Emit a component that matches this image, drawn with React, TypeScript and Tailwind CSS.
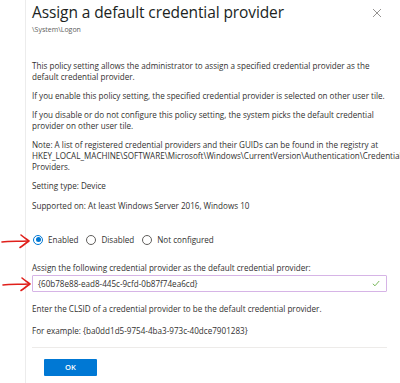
import React from "react";

const Arrow = ({ className }: { className: string }) => (
  <svg className={className} width="32" height="16" viewBox="0 0 32 16" fill="none">
    <path d="M1 9 C 8 8, 16 8.5, 27 8" stroke="#e0201b" strokeWidth="1.6" strokeLinecap="round" />
    <path d="M20 2 C 23 4.5, 26 6.5, 28 8 C 25 10, 22 12.5, 19 14.5" stroke="#e0201b" strokeWidth="1.6" strokeLinecap="round" strokeLinejoin="round" />
  </svg>
);

const Radio = ({ checked, label }: { checked?: boolean; label: string }) => (
  <div className="flex items-center gap-[5px]">
    <div className={`w-[10px] h-[10px] rounded-full border flex items-center justify-center ${checked ? "border-[#0078d4]" : "border-[#605e5c]"}`}>
      {checked && <div className="w-[5px] h-[5px] rounded-full bg-[#0078d4]" />}
    </div>
    <span>{label}</span>
  </div>
);

export default function App() {
  return (
    <div className="relative w-[400px] h-[383px] bg-white overflow-hidden text-[#323130] font-['Open_Sans','Noto_Sans',sans-serif]">
      <div className="ml-[25px] h-full border-l border-[#ececec] pl-[6px] pr-[13px]">
        <div className="flex items-start justify-between">
          <div className="pt-[1px]">
            <div className="text-[15.5px] leading-[22px] text-[#201f1e] tracking-[-0.1px]">Assign a default credential provider</div>
            <div className="text-[7px] leading-[9px] text-[#605e5c] mt-[2px]">\System\Logon</div>
          </div>
          <div className="pt-[8px] pr-[5px]">
            <svg width="10" height="10" viewBox="0 0 10 10">
              <path d="M1 1 L9 9 M9 1 L1 9" stroke="#8a8886" strokeWidth="0.9" />
            </svg>
          </div>
        </div>

        <div className="mt-[26px] text-[8.1px] leading-[11px]">
          <p className="mb-[8px] whitespace-nowrap">This policy setting allows the administrator to assign a specified credential provider as the<br />default credential provider.</p>
          <p className="mb-[8px] whitespace-nowrap">If you enable this policy setting, the specified credential provider is selected on other user tile.</p>
          <p className="mb-[8px] whitespace-nowrap">If you disable or do not configure this policy setting, the system picks the default credential<br />provider on other user tile.</p>
          <p className="mb-[8px] whitespace-nowrap">Note: A list of registered credential providers and their GUIDs can be found in the registry at<br />HKEY_LOCAL_MACHINE\SOFTWARE\Microsoft\Windows\CurrentVersion\Authentication\Credential<br />Providers.</p>
          <p className="mb-[9px]">Setting type: Device</p>
          <p>Supported on: At least Windows Server 2016, Windows 10</p>

          <div className="mt-[23px] flex items-center gap-[8px] pl-[1px]">
            <Radio checked label="Enabled" />
            <Radio label="Disabled" />
            <Radio label="Not configured" />
          </div>

          <p className="mt-[17px]">Assign the following credential provider as the default credential provider:</p>
          <div className="mt-[1.5px] h-[17px] border border-[#d6b4e6] rounded-[1px] flex items-center justify-between pl-[5px] pr-[6px]">
            <span>{"{60b78e88-ead8-445c-9cfd-0b87f74ea6cd}"}</span>
            <svg width="8" height="7" viewBox="0 0 8 7">
              <path d="M0.8 3.8 L3 5.8 L7.2 1" stroke="#6bb04a" strokeWidth="0.9" fill="none" />
            </svg>
          </div>
          <p className="mt-[11.5px]">Enter the CLSID of a credential provider to be the default credential provider.</p>
          <p className="mt-[11px]">For example: {"{ba0dd1d5-9754-4ba3-973c-40dce7901283}"}</p>
          <div className="mt-[10.5px] h-px bg-[#edebe9]" />
          <div className="mt-[11px] ml-[12px] w-[53px] h-[17px] bg-[#0078d4] rounded-[1px] flex items-center justify-center text-white text-[7.6px] font-semibold">OK</div>
        </div>
      </div>
      <Arrow className="absolute left-[1px] top-[233px]" />
      <Arrow className="absolute left-[2px] top-[276px]" />
    </div>
  );
}
